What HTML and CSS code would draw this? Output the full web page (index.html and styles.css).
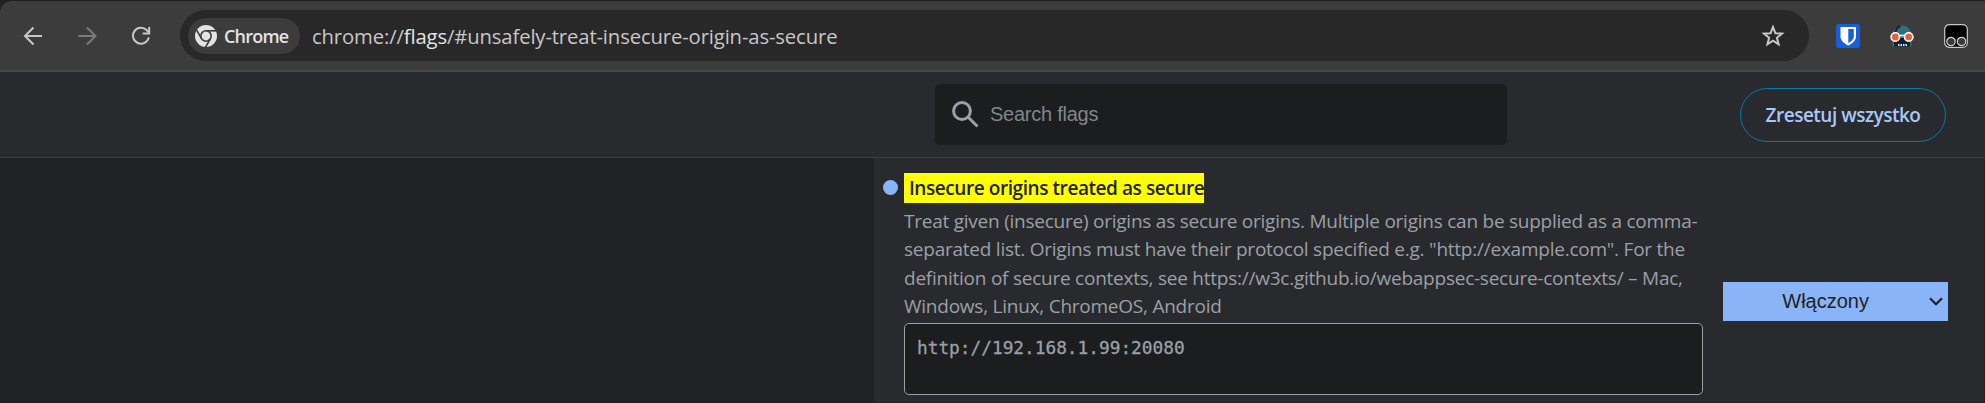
FILE: index.html
```
<!DOCTYPE html>
<html lang="pl">
<head>
<meta charset="utf-8">
<title>Experiments</title>
<link rel="stylesheet" href="styles.css">
</head>
<body>
<div class="window">
  <div class="toolbar">
    <div class="nav">
      <svg class="nav-icon" viewBox="0 0 20 20"><path d="M19 10H2.500M10.500 1.500L2 10l8.500 8.500"/></svg>
      <svg class="nav-icon disabled" viewBox="0 0 20 20"><path d="M1.500 10H18M10 1.500l8.500 8.500-8.500 8.500"/></svg>
      <svg class="nav-icon" viewBox="0 0 20 20"><path d="M17.800 11.400a8 8 0 1 1-2-7.200L18 6.400M18.200 1v6.500h-6.500"/></svg>
    </div>
    <div class="omnibox">
      <div class="chip">
        <svg class="chrome-logo" viewBox="0 0 22 22">
          <circle cx="11" cy="11" r="11" fill="#e3e3e3"/>
          <g stroke="#3c3c3c" stroke-width="1.600" fill="none">
            <path d="M11 5.800h10"/>
            <path d="M11 5.800h10" transform="rotate(120 11 11)"/>
            <path d="M11 5.800h10" transform="rotate(240 11 11)"/>
            <circle cx="11" cy="11" r="5.200"/>
          </g>
        </svg>
        <span>Chrome</span>
      </div>
      <div class="url">chrome://<b>flags</b>/#unsafely-treat-insecure-origin-as-secure</div>
      <svg class="star" viewBox="0 0 24 24"><path d="M12 3l2.400 6.200 6.600.400-5.100 4.200 1.700 6.500L12 16.700l-5.600 3.600 1.700-6.500L3 9.600l6.600-.400z"/></svg>
    </div>
    <div class="extensions">
      <svg class="ext" viewBox="0 0 24 24">
        <rect width="24" height="24" rx="3" fill="#175ddc"/>
        <path d="M4.500 3h15.500v9.500c0 4-3.500 7-7.800 9-4.200-2-7.700-5-7.700-9z" fill="#fff"/>
        <path d="M12.300 5h5.500v7.500c0 3-2.500 5-5.500 6.700z" fill="#175ddc"/>
      </svg>
      <svg class="ext" viewBox="0 0 24 24">
        <path d="M2.500 13C2.500 5 7 1.500 12 1.500S21.500 5 21.500 13v9.500h-19z" fill="#2f6f7e"/>
        <path d="M5.500 9c0-4 2.500-6 5-7" stroke="#16242e" stroke-width="2" fill="none"/>
        <path d="M4 14h16v8.500H4z" fill="#13212c"/>
        <path d="M8 21h9" stroke="#dfe6e8" stroke-width="2" stroke-dasharray="1.500 1"/>
        <g fill="#e8603c" stroke="#fff" stroke-width="1.600"><circle cx="5.300" cy="13" r="4.200"/><circle cx="18.700" cy="13" r="4.200"/><path d="M9.500 11.500h5"/></g>
      </svg>
      <svg class="ext" viewBox="0 0 24 24">
        <rect x=".7" y=".7" width="22.600" height="22.600" rx="4.500" fill="#000" stroke="#c8c8c8" stroke-width="1.200"/>
        <g fill="#3a3a3a" stroke="#d0d0d0" stroke-width="1.200"><circle cx="7" cy="17.500" r="4.200"/><circle cx="17.500" cy="17.500" r="4.200"/></g>
      </svg>
    </div>
  </div>

  <header class="page-header">
    <div class="search">
      <svg class="search-icon" viewBox="0 0 27 27"><circle cx="10" cy="10" r="8.400"/><path d="M16 16l9.500 9.500"/></svg>
      <span>Search flags</span>
    </div>
    <div class="reset">Zresetuj wszystko</div>
  </header>

  <main class="content">
    <section class="experiment">
      <span class="dot"></span>
      <div class="body">
        <h3 class="title">Insecure origins treated as secure</h3>
        <p class="desc">
          <span>Treat given (insecure) origins as secure origins. Multiple origins can be supplied as a comma-</span>
          <span>separated list. Origins must have their protocol specified e.g. "http://example.com". For the</span>
          <span>definition of secure contexts, see https://w3c.github.io/webappsec-secure-contexts/ – Mac,</span>
          <span>Windows, Linux, ChromeOS, Android</span>
        </p>
        <div class="origins">http://192.168.1.99:20080</div>
      </div>
      <div class="select">
        <span>Włączony</span>
        <svg class="chevron" viewBox="0 0 14 9"><path d="M1 1.200l6 6 6-6"/></svg>
      </div>
    </section>
  </main>
</div>
</body>
</html>
```
FILE: styles.css
```
* { box-sizing: border-box; }

body {
  margin: 0;
  background: #202124;
  font-family: "Open Sans", "Noto Sans", sans-serif;
}

.window {
  display: flex;
  flex-direction: column;
  width: 1985px;
  height: 403px;
  overflow: hidden;
  background: #1f2020;
}

.toolbar {
  display: flex;
  flex: none;
  align-items: flex-start;
  height: 71px;
  margin-top: 1px;
  padding-top: 9px;
  background: #3c3c3c;
  border-bottom: 2px solid #474848;
  border-top-left-radius: 12px;
}

.nav {
  display: flex;
  align-items: center;
  gap: 34px;
  width: 180px;
  height: 51px;
  padding-left: 23px;
}

.nav-icon {
  width: 20px;
  height: 20px;
  fill: none;
  stroke: #c7c7c7;
  stroke-width: 2;
}

.nav-icon.disabled { stroke: #7c7c7c; }

.omnibox {
  display: flex;
  align-items: center;
  width: 1629px;
  height: 51px;
  padding: 0 24px 0 8px;
  border-radius: 26px;
  background: #282828;
}

.chip {
  display: flex;
  align-items: center;
  gap: 7px;
  width: 112px;
  height: 36px;
  padding-left: 7px;
  border-radius: 18px;
  background: #3c3c3c;
  color: #e3e3e3;
  font-size: 18px;
  font-weight: 600;
  letter-spacing: -0.8px;
  white-space: nowrap;
}

.chrome-logo { width: 22px; height: 22px; }

.url {
  flex: 1;
  margin-left: 12px;
  color: #c7c7c7;
  font-size: 20.300px;
  letter-spacing: -0.140px;
  white-space: nowrap;
}

.url b { color: #e3e3e3; font-weight: 400; }

.star {
  width: 24px;
  height: 24px;
  fill: none;
  stroke: #c7c7c7;
  stroke-width: 2;
}

.extensions {
  display: flex;
  align-items: center;
  gap: 30px;
  height: 51px;
  padding-left: 27px;
}

.ext { width: 24px; height: 24px; }

.page-header {
  display: flex;
  flex: none;
  align-items: flex-start;
  height: 86px;
  padding: 12px 39px 0 935px;
  background: #292a2d;
  border-bottom: 1px solid #3f4042;
}

.search {
  display: flex;
  align-items: center;
  gap: 11px;
  width: 572px;
  height: 61px;
  padding-left: 17px;
  border-radius: 5px;
  background: #1c1d1e;
  color: #80868b;
  font: 20px "Liberation Sans", Arial, sans-serif;
  letter-spacing: -0.250px;
}

.search-icon {
  width: 27px;
  height: 27px;
  fill: none;
  stroke: #9aa0a6;
  stroke-width: 3;
}

.reset {
  width: 206px;
  height: 54px;
  margin: 4px 0 0 auto;
  border: 1px solid #007bae;
  border-radius: 27px;
  color: #a8c7fa;
  font-size: 19px;
  font-weight: 600;
  letter-spacing: -0.500px;
  line-height: 53px;
  text-align: center;
  white-space: nowrap;
}

.content {
  display: flex;
  flex: 1;
  padding-left: 874px;
  background: #202124;
}

.experiment {
  display: flex;
  flex: 1;
  padding: 15px 0 0 9px;
  border: solid #202124;
  border-width: 0 1px 1px 0;
  background: #292a2d;
}

.dot {
  width: 15px;
  height: 15px;
  margin: 7px 6px 0 0;
  border-radius: 50%;
  background: #8ab4f8;
}

.body { width: 799px; }

.title {
  width: 300px;
  height: 30px;
  margin: 0;
  padding-left: 5px;
  background: #ff0;
  color: #202124;
  font-size: 19px;
  font-weight: 600;
  letter-spacing: -0.430px;
  line-height: 30px;
  white-space: nowrap;
}

.desc {
  margin: 4px 0 0;
  color: #9aa0a6;
  font-size: 19px;
  letter-spacing: -0.240px;
  line-height: 28.250px;
}

.desc span { display: block; white-space: nowrap; }

.origins {
  height: 72px;
  margin-top: 3px;
  padding: 12px;
  border: 1px solid #9aa0a6;
  border-radius: 5px;
  background: #1c1d1e;
  color: #9aa0a6;
  font: 17.800px/24px "DejaVu Sans Mono", monospace;
  -webkit-text-stroke: 0.3px #9aa0a6;
}

.select {
  display: flex;
  align-items: center;
  justify-content: flex-end;
  width: 225px;
  height: 39px;
  margin: 109px 0 0 20px;
  padding-right: 5px;
  background: #8ab4f8;
  color: #202124;
  font: 20px "Liberation Sans", Arial, sans-serif;
}

.chevron {
  width: 14px;
  height: 9px;
  margin-left: 60px;
  fill: none;
  stroke: #202124;
  stroke-width: 2.200;
}
```
